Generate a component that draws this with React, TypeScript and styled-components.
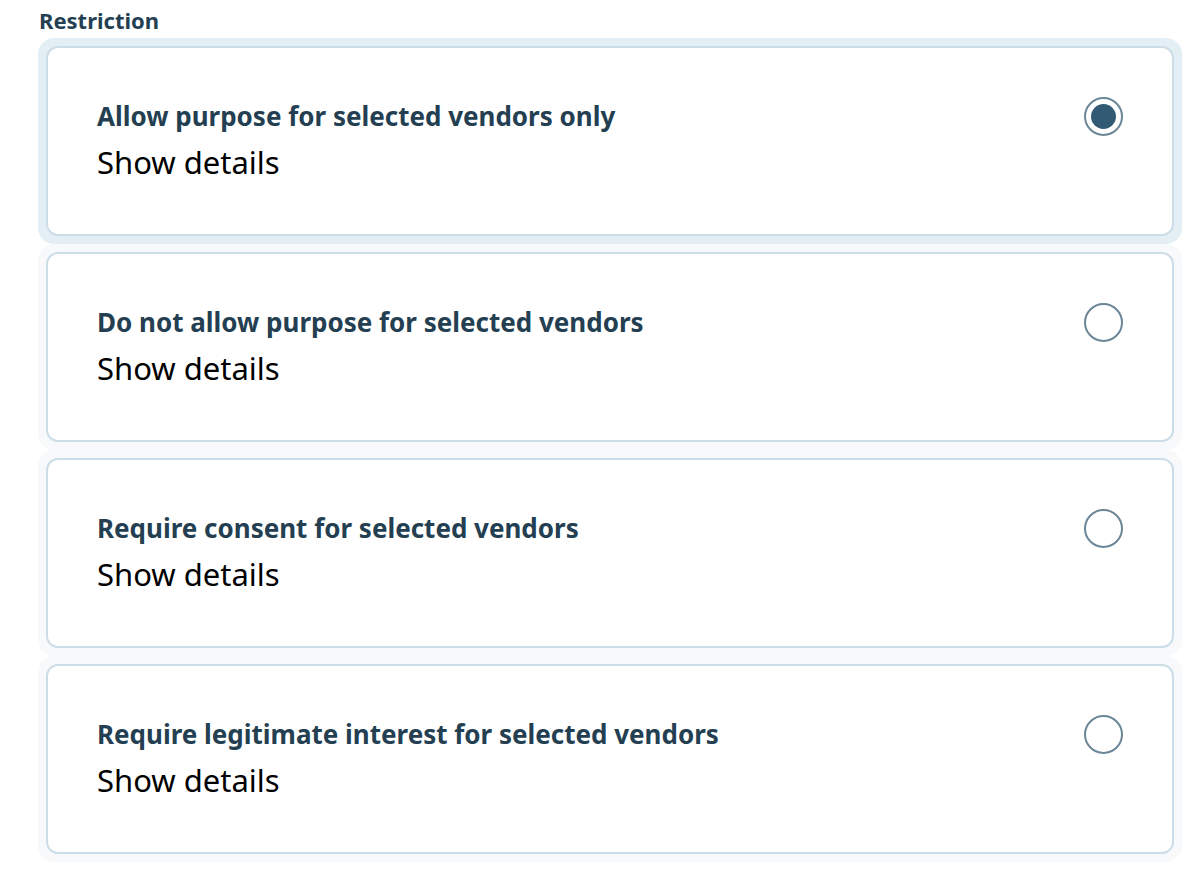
import React, { useState } from "react";
import styled, { createGlobalStyle } from "styled-components";

const Global = createGlobalStyle`
  html, body { margin: 0; padding: 0; background: #ffffff; }
  body { font-family: "Noto Sans", "Open Sans", Arial, sans-serif; }
`;

const Page = styled.div`
  padding: 6px 10px 0 38px;
  display: flex;
  flex-direction: column;
  width: 1144px;
`;

const Label = styled.div`
  font-size: 22px;
  font-weight: 700;
  color: #243f52;
  line-height: 28px;
  margin: 0 0 4px 1px;
`;

const List = styled.div`
  display: flex;
  flex-direction: column;
`;

const Option = styled.label<{ $selected: boolean }>`
  display: block;
  padding: 8px;
  border-radius: 16px;
  background: ${(p) => (p.$selected ? "#e4eff5" : "#f7f9fa")};
  cursor: pointer;
`;

const Card = styled.div`
  box-sizing: border-box;
  height: 190px;
  border: 2px solid #cddde7;
  border-radius: 12px;
  background: #ffffff;
  display: flex;
  align-items: center;
  justify-content: space-between;
  padding: 0 49px 0 49px;
`;

const Texts = styled.div`
  display: flex;
  flex-direction: column;
  gap: 4px;
  margin-bottom: 4px;
`;

const Title = styled.div`
  font-size: 26px;
  font-weight: 700;
  color: #243f52;
  line-height: 42px;
`;

const Details = styled.div`
  font-size: 31px;
  font-weight: 400;
  color: #000000;
  line-height: 42px;
`;

const Radio = styled.span<{ $checked: boolean }>`
  box-sizing: border-box;
  width: 39px;
  height: 39px;
  border-radius: 50%;
  border: 2px solid #6b8697;
  display: flex;
  align-items: center;
  justify-content: center;
  align-self: flex-start;
  margin-top: 49px;
  &::after {
    content: "";
    width: 25px;
    height: 25px;
    border-radius: 50%;
    background: #335a75;
    display: ${(p) => (p.$checked ? "block" : "none")};
  }
`;

const options = [
  "Allow purpose for selected vendors only",
  "Do not allow purpose for selected vendors",
  "Require consent for selected vendors",
  "Require legitimate interest for selected vendors",
];

export default function App() {
  const [sel, setSel] = useState(0);
  return (
    <>
      <Global />
      <Page>
        <Label>Restriction</Label>
        <List>
          {options.map((o, i) => (
            <Option key={o} $selected={sel === i} onClick={() => setSel(i)}>
              <Card>
                <Texts>
                  <Title>{o}</Title>
                  <Details>Show details</Details>
                </Texts>
                <Radio $checked={sel === i} />
              </Card>
            </Option>
          ))}
        </List>
      </Page>
    </>
  );
}
